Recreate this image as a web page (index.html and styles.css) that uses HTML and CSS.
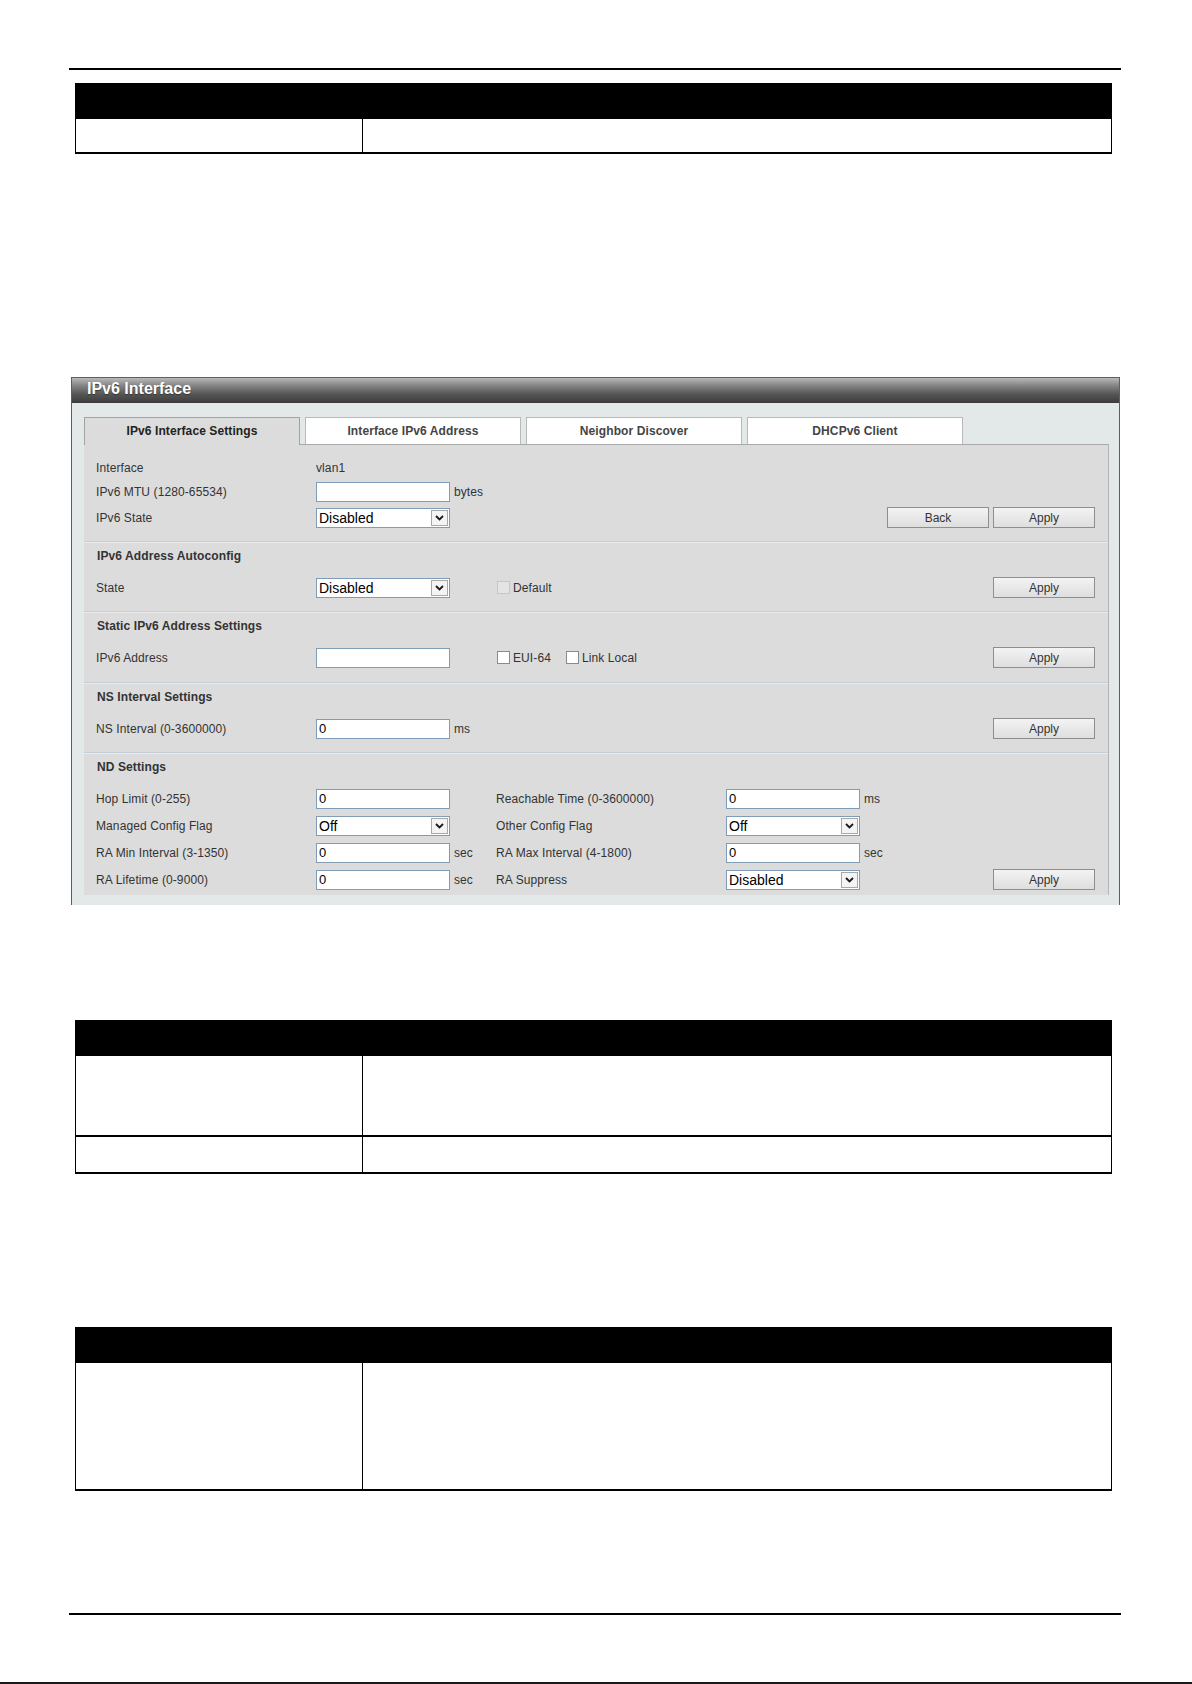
FILE: index.html
```html
<!DOCTYPE html>
<html lang="en">
<head>
  <meta charset="UTF-8" />
  <meta name="viewport" content="width=device-width, initial-scale=1.0" />
  <title>IPv6 Interface</title>
  <link rel="stylesheet" href="styles.css">
</head>
<body>
  <div class="page">
    <div class="rule"></div>

    <div class="desc desc-top">
      <div class="desc-head"></div>
      <div class="desc-row h35"><div class="cell"></div><div class="cell"></div></div>
    </div>

    <div class="panel">
      <div class="panel-title">IPv6 Interface</div>
      <div class="panel-body">
        <div class="tabs">
          <div class="tab active">IPv6 Interface Settings</div>
          <div class="tab">Interface IPv6 Address</div>
          <div class="tab">Neighbor Discover</div>
          <div class="tab">DHCPv6 Client</div>
        </div>

        <div class="tab-body">
          <!-- basic interface settings -->
          <div class="section first">
            <div class="row short">
              <span class="lbl">Interface</span>
              <span class="val">vlan1</span>
            </div>
            <div class="row mid">
              <span class="lbl">IPv6 MTU (1280-65534)</span>
              <span class="ctl"><input class="txt" type="text" value=""><span class="unit">bytes</span></span>
            </div>
            <div class="row">
              <span class="lbl">IPv6 State</span>
              <span class="ctl">
                <span class="dd"><select><option>Disabled</option><option>Enabled</option></select><span class="dd-btn"><svg width="9" height="6" viewBox="0 0 9 6"><polyline points="1,1 4.5,4.5 8,1" fill="none" stroke="#1a1a1a" stroke-width="1.8"/></svg></span></span>
              </span>
              <span class="actions"><button class="btn">Back</button><button class="btn">Apply</button></span>
            </div>
          </div>

          <div class="section">
            <div class="sec-title">IPv6 Address Autoconfig</div>
            <div class="row">
              <span class="lbl">State</span>
              <span class="ctl">
                <span class="dd"><select><option>Disabled</option><option>Enabled</option></select><span class="dd-btn"><svg width="9" height="6" viewBox="0 0 9 6"><polyline points="1,1 4.5,4.5 8,1" fill="none" stroke="#1a1a1a" stroke-width="1.8"/></svg></span></span>
              </span>
              <span class="checks">
                <label class="chk"><input type="checkbox" disabled>Default</label>
              </span>
              <span class="actions"><button class="btn">Apply</button></span>
            </div>
          </div>

          <div class="section tall">
            <div class="sec-title">Static IPv6 Address Settings</div>
            <div class="row">
              <span class="lbl">IPv6 Address</span>
              <span class="ctl"><input class="txt" type="text" value=""></span>
              <span class="checks">
                <label class="chk"><input type="checkbox">EUI-64</label>
                <label class="chk"><input type="checkbox">Link Local</label>
              </span>
              <span class="actions"><button class="btn">Apply</button></span>
            </div>
          </div>

          <div class="section">
            <div class="sec-title">NS Interval Settings</div>
            <div class="row">
              <span class="lbl">NS Interval (0-3600000)</span>
              <span class="ctl"><input class="txt" type="text" value="0"><span class="unit">ms</span></span>
              <span class="actions"><button class="btn">Apply</button></span>
            </div>
          </div>

          <div class="section last">
            <div class="sec-title">ND Settings</div>
            <div class="row">
              <span class="lbl">Hop Limit (0-255)</span>
              <span class="ctl"><input class="txt" type="text" value="0"></span>
              <span class="lbl">Reachable Time (0-3600000)</span>
              <span class="ctl"><input class="txt" type="text" value="0"><span class="unit">ms</span></span>
            </div>
            <div class="row">
              <span class="lbl">Managed Config Flag</span>
              <span class="ctl">
                <span class="dd"><select><option>Off</option><option>On</option></select><span class="dd-btn"><svg width="9" height="6" viewBox="0 0 9 6"><polyline points="1,1 4.5,4.5 8,1" fill="none" stroke="#1a1a1a" stroke-width="1.8"/></svg></span></span>
              </span>
              <span class="lbl">Other Config Flag</span>
              <span class="ctl">
                <span class="dd"><select><option>Off</option><option>On</option></select><span class="dd-btn"><svg width="9" height="6" viewBox="0 0 9 6"><polyline points="1,1 4.5,4.5 8,1" fill="none" stroke="#1a1a1a" stroke-width="1.8"/></svg></span></span>
              </span>
            </div>
            <div class="row">
              <span class="lbl">RA Min Interval (3-1350)</span>
              <span class="ctl"><input class="txt" type="text" value="0"><span class="unit">sec</span></span>
              <span class="lbl">RA Max Interval (4-1800)</span>
              <span class="ctl"><input class="txt" type="text" value="0"><span class="unit">sec</span></span>
            </div>
            <div class="row">
              <span class="lbl">RA Lifetime (0-9000)</span>
              <span class="ctl"><input class="txt" type="text" value="0"><span class="unit">sec</span></span>
              <span class="lbl">RA Suppress</span>
              <span class="ctl">
                <span class="dd"><select><option>Disabled</option><option>Enabled</option></select><span class="dd-btn"><svg width="9" height="6" viewBox="0 0 9 6"><polyline points="1,1 4.5,4.5 8,1" fill="none" stroke="#1a1a1a" stroke-width="1.8"/></svg></span></span>
              </span>
              <span class="actions"><button class="btn">Apply</button></span>
            </div>
          </div>
        </div>
      </div>
    </div>

    <div class="desc desc-mid">
      <div class="desc-head"></div>
      <div class="desc-row h81"><div class="cell"></div><div class="cell"></div></div>
      <div class="desc-row h37"><div class="cell"></div><div class="cell"></div></div>
    </div>

    <div class="desc desc-low">
      <div class="desc-head"></div>
      <div class="desc-row h128"><div class="cell"></div><div class="cell"></div></div>
    </div>

    <div class="rule rule-bottom"></div>
  </div>
  <div class="page-edge"></div>
</body>
</html>
```

FILE: styles.css
```css
* {
  box-sizing: border-box;
}
html, body {
  margin: 0;
  padding: 0;
  background: #fff;
}
body {
  font-family: "Liberation Sans", Arial, sans-serif;
  font-size: 12px;
  letter-spacing: 0.1px;
  color: #333;
}
.page {
  width: 1052px;
  margin-left: 69px;
  padding-top: 68px;
}
.rule {
  height: 2px;
  background: #000;
}
.rule-bottom {
  margin-top: 122px;
}
.page-edge {
  margin-top: 67px;
  height: 2px;
  background: #1a1a1a;
}

/* description tables */
.desc {
  width: 1037px;
  margin-left: 6px;
  border-left: 1px solid #000;
  border-right: 1px solid #000;
}
.desc-top {
  margin-top: 13px;
}
.desc-mid {
  margin-top: 115px;
}
.desc-low {
  margin-top: 153px;
}
.desc-head {
  height: 36px;
  background: #000;
}
.desc-row {
  display: grid;
  grid-template-columns: 287px 1fr;
  border-bottom: 2px solid #000;
}
.desc-row .cell:first-child {
  border-right: 1px solid #000;
}
.h35 { height: 35px; }
.h37 { height: 37px; }
.h81 { height: 81px; }
.h128 { height: 128px; }

/* IPv6 interface panel */
.panel {
  margin-top: 223px;
  margin-left: 2px;
  width: 1049px;
  background: #e3e9e9;
  border: 1px solid #3b6890;
  border-bottom: none;
}
.panel-title {
  height: 25px;
  padding-left: 15px;
  line-height: 22px;
  font-size: 16px;
  font-weight: bold;
  letter-spacing: 0;
  color: #fff;
  text-shadow: 0 1px 1px #333;
  background: linear-gradient(to bottom, #b9b9b9 0%, #858585 30%, #555 65%, #3c3c3c 100%);
}
.panel-body {
  padding: 14px 10px 10px 12px;
}
.tabs {
  display: flex;
  align-items: flex-end;
  gap: 5px;
  height: 28px;
  border-bottom: 1px solid #a9a9a9;
}
.tab {
  width: 216px;
  height: 27px;
  line-height: 26px;
  text-align: center;
  font-weight: bold;
  color: #444;
  background: #fff;
  border: 1px solid #b9b9b9;
  border-bottom: none;
}
.tab.active {
  height: 28px;
  margin-bottom: -1px;
  color: #222;
  background: #dcdcdc;
  border-color: #a3a3a3;
}
.tab-body {
  background: #dcdcdc;
  border-right: 1px solid #b5b5b5;
}
.section {
  padding-bottom: 10px;
  border-top: 1px solid #c3ced6;
  box-shadow: inset 0 1px 0 #ececec;
}
.section.first {
  padding-top: 11px;
  border-top: none;
  box-shadow: none;
}
.section.tall {
  padding-bottom: 11px;
}
.section.last {
  padding-bottom: 2px;
}
.sec-title {
  height: 32px;
  line-height: 29px;
  padding-left: 13px;
  font-weight: bold;
}
.row {
  display: grid;
  grid-template-columns: 220px 180px 230px 1fr auto;
  align-items: center;
  height: 27px;
  padding: 0 13px 0 12px;
}
.row.short {
  height: 23px;
}
.row.mid {
  height: 25px;
}
.ctl {
  display: flex;
  align-items: center;
}
.unit {
  margin-left: 4px;
}
.checks {
  grid-column: 3 / span 2;
  display: flex;
  align-items: center;
}
.actions {
  grid-column: 5;
  display: flex;
  gap: 4px;
}

/* form controls */
.txt {
  width: 134px;
  height: 20px;
  margin: 0;
  padding: 0 2px;
  font-family: inherit;
  font-size: 13px;
  color: #000;
  background: #fff;
  border: 1px solid #7f9db9;
  outline: none;
}
.dd {
  display: inline-flex;
  align-items: center;
  width: 134px;
  height: 20px;
  background: #fff;
  border: 1px solid #7f9db9;
}
.dd select {
  -webkit-appearance: none;
  appearance: none;
  flex: 1;
  min-width: 0;
  height: 18px;
  padding: 0 2px;
  margin: 0;
  border: none;
  outline: none;
  background: transparent;
  font-family: inherit;
  font-size: 14px;
  color: #000;
}
.dd-btn {
  display: flex;
  align-items: center;
  justify-content: center;
  width: 17px;
  height: 16px;
  margin-right: 1px;
  background: #f4f4f4;
  border: 1px solid #a8a8a8;
}
.chk {
  display: inline-flex;
  align-items: center;
  margin-right: 14px;
}
.chk input {
  -webkit-appearance: none;
  appearance: none;
  width: 13px;
  height: 13px;
  margin: 0 3px 0 1px;
  background: #fff;
  border: 1px solid #8a8a8a;
}
.chk input:disabled {
  background: #e4e4e4;
  border-color: #c6c6c6;
}
.btn {
  width: 102px;
  height: 21px;
  padding: 0;
  font-family: inherit;
  font-size: 12px;
  color: #333;
  background: linear-gradient(to bottom, #f3f3f3, #dedede);
  border: 1px solid #8e8e8e;
  cursor: pointer;
}
```
